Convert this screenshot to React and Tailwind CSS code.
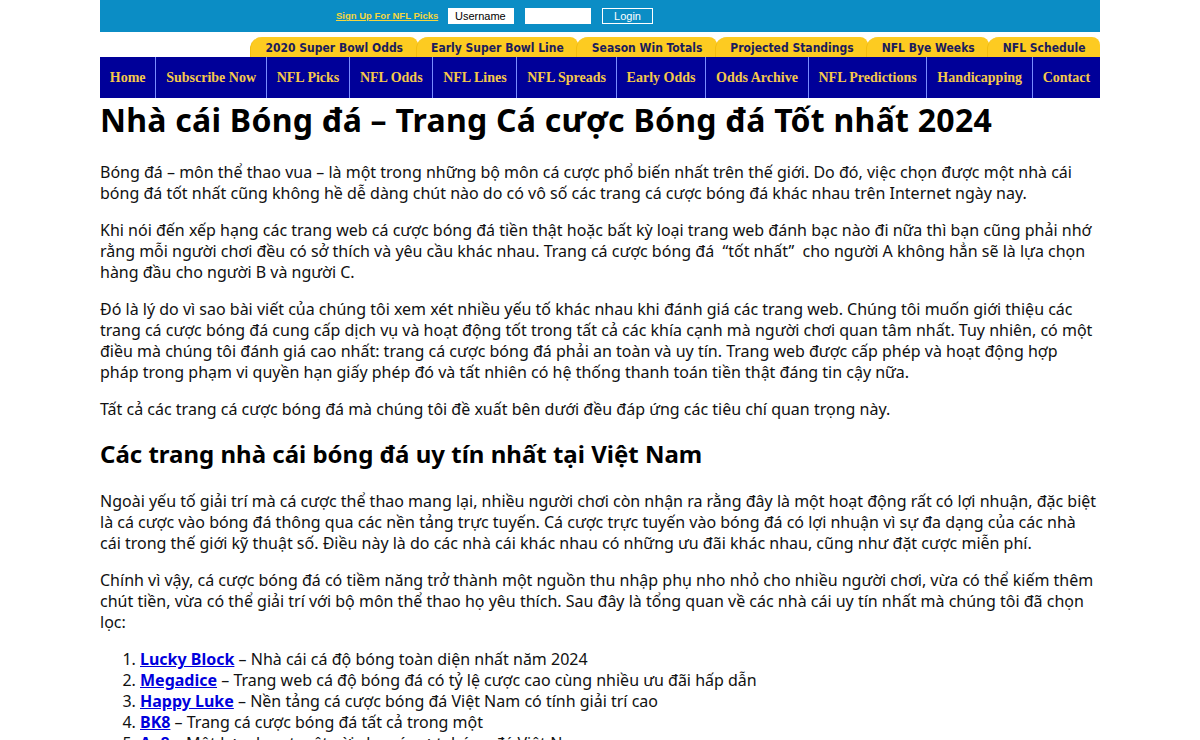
import React from 'react';

const tabs = ['2020 Super Bowl Odds', 'Early Super Bowl Line', 'Season Win Totals', 'Projected Standings', 'NFL Bye Weeks', 'NFL Schedule'];

const nav = ['Home', 'Subscribe Now', 'NFL Picks', 'NFL Odds', 'NFL Lines', 'NFL Spreads', 'Early Odds', 'Odds Archive', 'NFL Predictions', 'Handicapping', 'Contact'];

const casinos = [
  ['Lucky Block', 'Nhà cái cá độ bóng toàn diện nhất năm 2024'],
  ['Megadice', 'Trang web cá độ bóng đá có tỷ lệ cược cao cùng nhiều ưu đãi hấp dẫn'],
  ['Happy Luke', 'Nền tảng cá cược bóng đá Việt Nam có tính giải trí cao'],
  ['BK8', 'Trang cá cược bóng đá tất cả trong một'],
  ['Ae8', 'Một lựa chọn tuyệt vời cho cá cược bóng đá Việt Nam'],
];

export default function App() {
  return (
    <div className="w-[1000px] mx-auto bg-white" style={{ fontFamily: '"Noto Sans", "Open Sans", sans-serif' }}>
      {/* top login strip */}
      <div className="h-8 bg-[#0b8dc5] flex items-center pl-[236px] gap-[11px]" style={{ fontFamily: '"Liberation Sans", Arial, sans-serif' }}>
        <a href="#" className="w-[101px] text-[9.5px] font-bold text-[#f5d63d] underline whitespace-nowrap mt-[1px]">Sign Up For NFL Picks</a>
        <div className="w-[66px] h-[16px] bg-white text-[11px] text-black flex items-center pl-[7px]">Username</div>
        <div className="w-[66px] h-[16px] bg-white"></div>
        <div className="w-[51px] h-[16px] border border-white text-white text-[11px] flex items-center justify-center">Login</div>
      </div>

      {/* yellow tabs */}
      <div className="flex h-[25px] items-end pl-[150px]">
        {tabs.map((t) => (
          <div key={t} className="h-[20px] grow bg-[#fdcb21] rounded-tl-[12px] rounded-tr-[8px] flex items-center justify-center text-[12px] font-bold text-[#1b1b5c] -ml-[2px] first:ml-0 border-l border-[#f1bd10] pt-[1px]" style={{ fontFamily: 'Tahoma, "DejaVu Sans Condensed", "DejaVu Sans", sans-serif' }}>
            {t}
          </div>
        ))}
      </div>

      {/* main nav */}
      <div className="flex h-[41px] bg-[#000099]" style={{ fontFamily: 'Georgia, "Liberation Serif", serif' }}>
        {nav.map((n, i) => (
          <a key={n} href="#" className={`grow flex items-center justify-center px-[6px] whitespace-nowrap text-[14px] font-bold text-[#f5c84a] ${i > 0 ? 'border-l border-[#7a8cff]' : ''}`}>
            {n}
          </a>
        ))}
      </div>

      {/* article */}
      <div className="text-[16px] leading-[21px] text-[#111]">
        <h1 className="text-[32px] font-bold leading-[40px] tracking-[0.25px] mt-[2px] mb-[22px] text-black">Nhà cái Bóng đá – Trang Cá cược Bóng đá Tốt nhất 2024</h1>
        <p className="mb-[16px]">Bóng đá – môn thể thao vua – là một trong những bộ môn cá cược phổ biến nhất trên thế giới. Do đó, việc chọn được một nhà cái bóng đá tốt nhất cũng không hề dễ dàng chút nào do có vô số các trang cá cược bóng đá khác nhau trên Internet ngày nay.</p>
        <p className="mb-[16px]">Khi nói đến xếp hạng các trang web cá cược bóng đá tiền thật hoặc bất kỳ loại trang web đánh bạc nào đi nữa thì bạn cũng phải nhớ rằng mỗi người chơi đều có sở thích và yêu cầu khác nhau. Trang cá cược bóng đá &nbsp;“tốt nhất” &nbsp;cho người A không hẳn sẽ là lựa chọn hàng đầu cho người B và người C.</p>
        <p className="mb-[16px]">Đó là lý do vì sao bài viết của chúng tôi xem xét nhiều yếu tố khác nhau khi đánh giá các trang web. Chúng tôi muốn giới thiệu các trang cá cược bóng đá cung cấp dịch vụ và hoạt động tốt trong tất cả các khía cạnh mà người chơi quan tâm nhất. Tuy nhiên, có một điều mà chúng tôi đánh giá cao nhất: trang cá cược bóng đá phải an toàn và uy tín. Trang web được cấp phép và hoạt động hợp pháp trong phạm vi quyền hạn giấy phép đó và tất nhiên có hệ thống thanh toán tiền thật đáng tin cậy nữa.</p>
        <p className="mb-[16px]">Tất cả các trang cá cược bóng đá mà chúng tôi đề xuất bên dưới đều đáp ứng các tiêu chí quan trọng này.</p>
        <h2 className="text-[24px] font-bold leading-[32px] mt-[18px] mb-[21px] text-black">Các trang nhà cái bóng đá uy tín nhất tại Việt Nam</h2>
        <p className="mb-[16px]">Ngoài yếu tố giải trí mà cá cược thể thao mang lại, nhiều người chơi còn nhận ra rằng đây là một hoạt động rất có lợi nhuận, đặc biệt là cá cược vào bóng đá thông qua các nền tảng trực tuyến. Cá cược trực tuyến vào bóng đá có lợi nhuận vì sự đa dạng của các nhà cái trong thế giới kỹ thuật số. Điều này là do các nhà cái khác nhau có những ưu đãi khác nhau, cũng như đặt cược miễn phí.</p>
        <p className="mb-[16px]">Chính vì vậy, cá cược bóng đá có tiềm năng trở thành một nguồn thu nhập phụ nho nhỏ cho nhiều người chơi, vừa có thể kiếm thêm chút tiền, vừa có thể giải trí với bộ môn thể thao họ yêu thích. Sau đây là tổng quan về các nhà cái uy tín nhất mà chúng tôi đã chọn lọc:</p>
        <ol className="list-decimal pl-[40px]">
          {casinos.map(([name, desc]) => (
            <li key={name}>
              <a href="#" className="font-bold text-[#0000dd] underline">{name}</a> – {desc}
            </li>
          ))}
        </ol>
      </div>
    </div>
  );
}
